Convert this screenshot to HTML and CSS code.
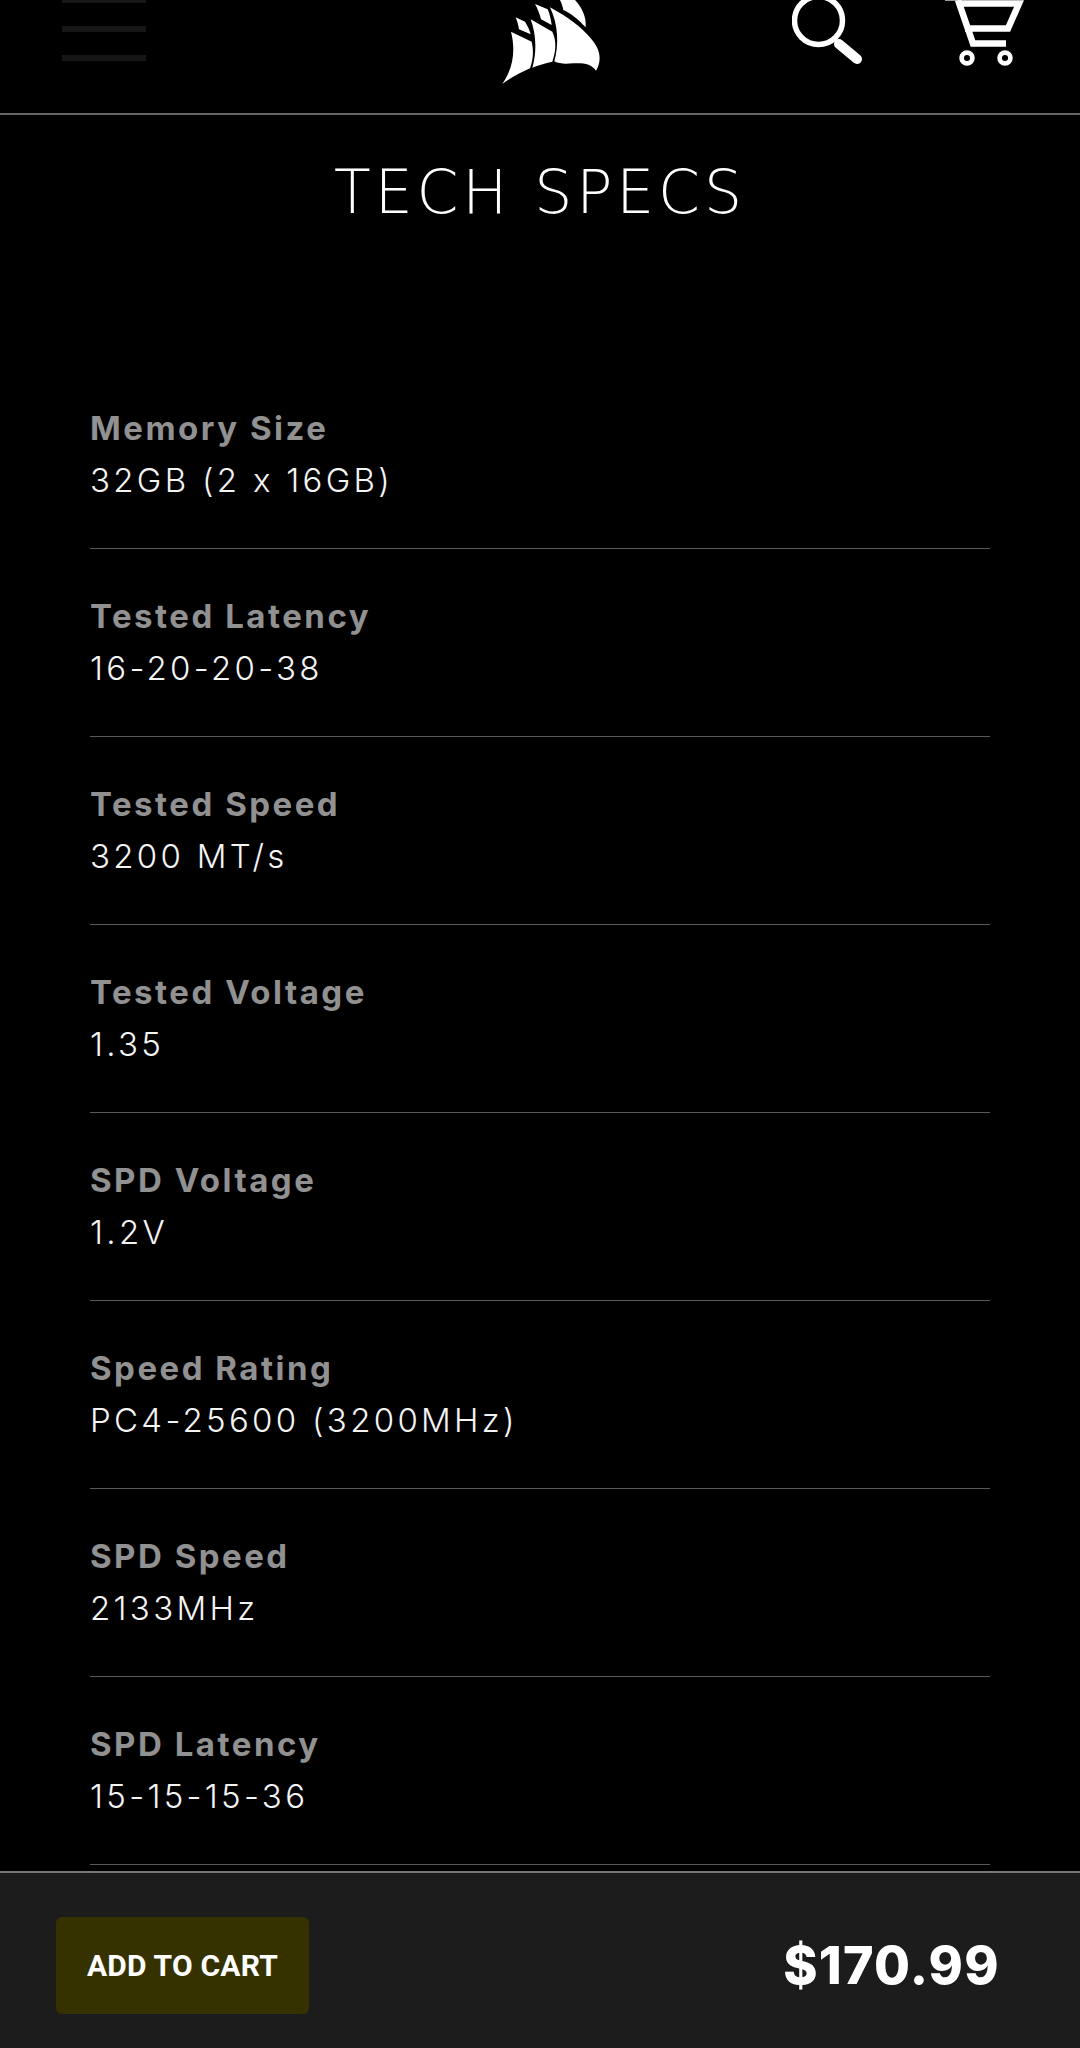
FILE: index.html
```html
<!DOCTYPE html>
<html lang="en">
<head>
<meta charset="utf-8">
<title>Tech Specs</title>
<link rel="stylesheet" href="styles.css">
</head>
<body>
<header class="topbar">
  <div class="burger"><span></span><span></span><span></span></div>
  <svg class="logo" viewBox="0 0 345 270" width="115" height="90">
    <path d="M48 95 L110 125 C118 160 112 185 105 205 C75 218 45 235 22 252 C55 205 62 150 48 95 Z"/>
    <path d="M107 58 L172 95 C186 125 182 155 172 185 C150 190 130 196 112 203 C124 165 126 110 107 58 Z"/>
    <path d="M165 22 L205 45 C250 75 285 105 305 140 C318 165 316 190 303 212 C290 192 265 188 235 190 C215 191 195 193 178 184 C192 135 190 75 165 22 Z"/>
    <path d="M62 52 L90 65 C98 78 104 90 107 103 L72 88 C70 76 67 64 62 52 Z"/>
    <path d="M120 12 L158 28 C164 42 168 58 170 75 L138 58 C134 42 128 26 120 12 Z"/>
    <path d="M195 0 L240 0 C260 22 275 50 272 82 C250 58 225 38 205 30 C203 20 200 10 195 0 Z"/>
  </svg>
  <svg class="search" viewBox="0 0 72 66" width="72" height="66">
    <circle cx="26.5" cy="20.5" r="24" fill="none" stroke="#fff" stroke-width="5.5"/>
    <path d="M47 44 L65 59" stroke="#fff" stroke-width="10" stroke-linecap="round"/>
  </svg>
  <svg class="cart" viewBox="0 0 80 66" width="80" height="66">
    <path class="cart-grip" d="M0 0.5 H12"/>
    <path class="cart-frame" d="M13 3.5 H74 L63 28.5 H20 M13 0 L28 43.5 H61"/>
    <circle class="cart-wheel" cx="22" cy="58" r="5.4"/>
    <circle class="cart-wheel" cx="60" cy="58" r="5.4"/>
  </svg>
</header>
<main class="specs">
  <h1 class="title">TECH SPECS</h1>
  <dl class="list">
    <div class="row"><dt>Memory Size</dt><dd>32GB (2 x 16GB)</dd></div>
    <div class="row"><dt>Tested Latency</dt><dd>16-20-20-38</dd></div>
    <div class="row"><dt>Tested Speed</dt><dd>3200 MT/s</dd></div>
    <div class="row"><dt>Tested Voltage</dt><dd>1.35</dd></div>
    <div class="row"><dt>SPD Voltage</dt><dd>1.2V</dd></div>
    <div class="row"><dt>Speed Rating</dt><dd>PC4-25600 (3200MHz)</dd></div>
    <div class="row"><dt>SPD Speed</dt><dd>2133MHz</dd></div>
    <div class="row"><dt>SPD Latency</dt><dd>15-15-15-36</dd></div>
  </dl>
</main>
<footer class="buybar">
  <button class="add">ADD TO CART</button>
  <span class="price">$170.99</span>
</footer>
</body>
</html>
```
FILE: styles.css
```css
html, body { margin: 0; padding: 0; background: #000; height: 2048px; overflow: hidden; }
body { font-family: "Inter", "Liberation Sans", sans-serif; color: #fff; }
.topbar { height: 113px; border-bottom: 2px solid #666; position: relative; overflow: hidden; }
.burger { position: absolute; left: 62px; top: -3px; width: 84px; display: flex; flex-direction: column; gap: 23px; }
.burger span { display: block; height: 6px; background: #161616; }
.logo { position: absolute; left: 495px; top: 0; fill: #fff; }
.search { position: absolute; left: 792px; top: 0; }
.cart { position: absolute; left: 945px; top: 0; }
.cart-grip { fill: none; stroke: #999; stroke-width: 1; }
.cart-frame { fill: none; stroke: #fff; stroke-width: 6.5; }
.cart-wheel { fill: none; stroke: #fff; stroke-width: 4.7; }
.title { margin: 0; height: 246px; padding-top: 42px; box-sizing: border-box; text-align: center; font-family: "DejaVu Sans", sans-serif; font-size: 60px; font-weight: 200; line-height: 70px; letter-spacing: 3.9px; }
.list { margin: 0 90px; }
.row { height: 188px; box-sizing: border-box; padding-top: 45px; border-bottom: 1px solid #5a5a5a; display: flex; flex-direction: column; gap: 8px; }
.row dt { font-size: 33px; font-weight: 700; color: #919191; letter-spacing: 2.5px; line-height: 44px; }
.row dd { margin: 0; font-size: 33px; font-weight: 340; color: #f4f4f4; letter-spacing: 3.3px; line-height: 44px; }
.buybar { position: fixed; left: 0; right: 0; top: 1871px; height: 177px; background: #1c1c1c; border-top: 2px solid #777; box-sizing: border-box; display: flex; align-items: center; justify-content: space-between; padding: 10px 80px 0 56px; }
.add { width: 253px; height: 97px; background: #363200; border: 0; border-radius: 6px; color: #fff; font-family: "Roboto", sans-serif; font-size: 30px; font-weight: 700; letter-spacing: 0.2px; padding: 0; }
.price { font-size: 52px; font-weight: 800; letter-spacing: 1.3px; }
```
